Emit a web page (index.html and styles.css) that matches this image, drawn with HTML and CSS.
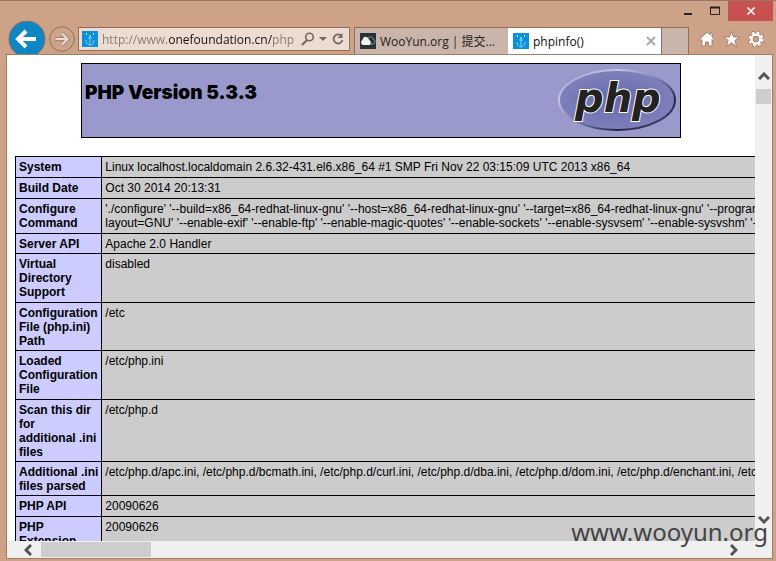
FILE: index.html
```html
<!DOCTYPE html>
<html lang="en">
	<head>
		<meta charset="UTF-8">
		<title>phpinfo()</title>
		<link rel="stylesheet" href="styles.css">
	</head>
	<body>
		<div class="window">
			<!-- window buttons -->
			<div class="titlebar">
				<button class="win-btn" aria-label="Minimize"><svg width="10" height="10"><path d="M1 8h8" stroke="#222" stroke-width="2"/></svg></button>
				<button class="win-btn" aria-label="Maximize"><svg width="10" height="10"><path d="M.5 1v7.500h9V1" fill="none" stroke="#222"/><path d="M0 1.500h10" stroke="#222" stroke-width="2"/></svg></button>
				<button class="win-btn close" aria-label="Close"><svg width="10" height="10"><path d="M1.500 1.500l7 7M8.500 1.500l-7 7" stroke="#fff" stroke-width="1.600"/></svg></button>
			</div>

			<!-- navigation, address and tabs -->
			<div class="nav">
				<button class="back" aria-label="Back">
					<svg width="38" height="38" viewBox="0 0 38 38"><circle cx="19" cy="18" r="18" fill="#0e86c4" stroke="#8b6d5c"/><path d="M18 10l-8 8 8 8M11 18h17" fill="none" stroke="#fff" stroke-width="4"/></svg>
				</button>
				<button class="forward" aria-label="Forward">
					<svg width="26" height="26" viewBox="0 0 26 26"><circle cx="13" cy="13" r="12.300" fill="none" stroke="#91705e"/><path d="M13 7.500l5.500 5.500-5.500 5.500M6 13h12" fill="none" stroke="#a18575" stroke-width="4"/><path d="M13 7.500l5.500 5.500-5.500 5.500M6.500 13h11.500" fill="none" stroke="#eddbd0" stroke-width="2.200"/></svg>
				</button>
				<div class="address">
					<svg class="favicon" viewBox="0 0 16 16"><path d="M0 0h16v16H0z" fill="#0b91da"/><path d="M8 6v8M4 9c0 3 2 5 4 5s4-2 4-5M6 7h4" fill="none" stroke="#8acbee"/><path d="M7 4h2v2H7z" fill="#8acbee"/><path d="M4 2h1v2H4zM11 2h1v2h-1z" fill="#d4eefa"/></svg>
					<input class="url" type="text" aria-label="Address" value="http://www.onefoundation.cn/php">
					<button class="tool" aria-label="Search"><svg width="14" height="14"><circle cx="8.500" cy="5" r="3.800" fill="none" stroke="#75665e" stroke-width="1.600"/><path d="M6 8l-5 5" stroke="#75665e" stroke-width="2.200"/></svg></button>
					<button class="tool" aria-label="Show address list"><svg width="8" height="14"><path d="M0 5h8l-4 4z" fill="#75665e"/></svg></button>
					<button class="tool" aria-label="Refresh"><svg width="14" height="14"><path d="M10.500 4A4.500 4.500 0 1 0 11.500 8" fill="none" stroke="#75665e" stroke-width="1.800"/><path d="M11.500 1v5h-5z" fill="#75665e"/></svg></button>
				</div>
				<div class="tabs">
					<a class="tab" href="#">
						<svg class="favicon" viewBox="0 0 16 16"><path d="M0 0h16v16H0z" fill="#2c3138"/><path d="M8 5c2-2 5-1 5 1 3 1 2 5 0 5H8z" fill="none" stroke="#8795a0"/><path d="M3 12a2.700 2.700 0 0 1-.5-5C3 3.500 7 2.500 8.500 6L11 9l-1 3z" fill="#f2f3f4"/></svg>
						<span>WooYun.org | 提交...</span>
					</a>
					<a class="tab active" href="#">
						<svg class="favicon" viewBox="0 0 16 16"><path d="M0 0h16v16H0z" fill="#0b91da"/><path d="M8 6v8M4 9c0 3 2 5 4 5s4-2 4-5M6 7h4" fill="none" stroke="#8acbee"/><path d="M7 4h2v2H7z" fill="#8acbee"/><path d="M4 2h1v2H4zM11 2h1v2h-1z" fill="#d4eefa"/></svg>
						<span>phpinfo()</span>
						<svg class="tab-close" width="10" height="10"><path d="M1 1l8 8M9 1l-8 8" stroke="#aaa" stroke-width="2"/></svg>
					</a>
					<button class="new-tab" aria-label="New tab"></button>
				</div>
				<div class="tools">
					<button class="tool" aria-label="Home"><svg width="16" height="16"><path d="M8 1L.5 8.500l1.200 1L3 8.500V15h3.500v-4h3v4H13V8.500l1.300 1 1.200-1L13 6V2h-2v2z" fill="#fff" stroke="#94725f" stroke-width=".8"/></svg></button>
					<button class="tool" aria-label="Favorites"><svg width="17" height="16"><path d="M8.500.5l2 5.500h6l-4.700 3.500 1.900 6-5.200-3.700-5.200 3.700 1.900-6L.5 6h6z" fill="#fff" stroke="#94725f" stroke-width=".8"/></svg></button>
					<button class="tool" aria-label="Tools"><svg width="16" height="16"><g fill="none"><circle cx="8" cy="8" r="6.500" stroke="#94725f" stroke-width="3.600" stroke-dasharray="3.100 2"/><circle cx="8" cy="8" r="4.500" stroke="#94725f" stroke-width="3.800"/><circle cx="8" cy="8" r="6.500" stroke="#fff" stroke-width="2.200" stroke-dasharray="2.700 2.400"/><circle cx="8" cy="8" r="4.500" stroke="#fff" stroke-width="2.600"/></g></svg></button>
				</div>
			</div>

			<div class="viewport">
				<div class="page">
					<div class="header">
						<h1>PHP Version 5.3.3</h1>
						<svg class="logo" width="120" height="67" viewBox="0 0 120 67" role="img" aria-label="PHP logo">
							<defs>
								<linearGradient id="edge" x1="0" y1="0" x2="1" y2="1">
									<stop offset="0" stop-color="#9999cc"/>
									<stop offset=".25" stop-color="#c6c6e4"/>
									<stop offset=".5" stop-color="#8080b8"/>
									<stop offset=".75" stop-color="#25253f"/>
									<stop offset="1" stop-color="#55558a"/>
								</linearGradient>
								<radialGradient id="face">
									<stop offset="0" stop-color="#6a6aaa"/>
									<stop offset="1" stop-color="#7d80bb"/>
								</radialGradient>
							</defs>
							<ellipse cx="60" cy="33" rx="58" ry="30" fill="url(#face)" stroke="url(#edge)" stroke-width="2"/>
							<text class="outline" x="18" y="45">php</text>
						</svg>
					</div>

					<table class="info">
						<tr><th>System</th><td>Linux localhost.localdomain 2.6.32-431.el6.x86_64 #1 SMP Fri Nov 22 03:15:09 UTC 2013 x86_64</td></tr>
						<tr><th>Build Date</th><td>Oct 30 2014 20:13:31</td></tr>
						<tr><th>Configure<br>Command</th><td>'./configure' '--build=x86_64-redhat-linux-gnu' '--host=x86_64-redhat-linux-gnu' '--target=x86_64-redhat-linux-gnu' '--program<br>layout=GNU' '--enable-exif' '--enable-ftp' '--enable-magic-quotes' '--enable-sockets' '--enable-sysvsem' '--enable-sysvshm' '-</td></tr>
						<tr class="snug"><th>Server API</th><td>Apache 2.0 Handler</td></tr>
						<tr><th>Virtual<br>Directory<br>Support</th><td>disabled</td></tr>
						<tr class="snug"><th>Configuration<br>File (php.ini)<br>Path</th><td>/etc</td></tr>
						<tr><th>Loaded<br>Configuration<br>File</th><td>/etc/php.ini</td></tr>
						<tr class="snug"><th>Scan this dir<br>for<br>additional .ini<br>files</th><td>/etc/php.d</td></tr>
						<tr class="snug"><th>Additional .ini<br>files parsed</th><td>/etc/php.d/apc.ini, /etc/php.d/bcmath.ini, /etc/php.d/curl.ini, /etc/php.d/dba.ini, /etc/php.d/dom.ini, /etc/php.d/enchant.ini, /etc</td></tr>
						<tr><th>PHP API</th><td>20090626</td></tr>
						<tr><th>PHP<br>Extension</th><td>20090626</td></tr>
					</table>
				</div>

				<div class="scroll-y">
					<svg width="12" height="8"><path d="M1 7l5-5 5 5" fill="none" stroke="#555" stroke-width="3"/></svg>
					<div class="thumb"></div>
					<svg width="12" height="8"><path d="M1 1l5 5 5-5" fill="none" stroke="#555" stroke-width="3"/></svg>
				</div>
				<div class="scroll-x">
					<svg width="8" height="12"><path d="M7 1L2 6l5 5" fill="none" stroke="#555" stroke-width="3"/></svg>
					<div class="thumb"></div>
					<svg width="8" height="12"><path d="M1 1l5 5-5 5" fill="none" stroke="#555" stroke-width="3"/></svg>
				</div>
			</div>
			<div class="watermark">www.wooyun.org</div>
		</div>
	</body>
</html>
```
FILE: styles.css
```css
* {
    margin: 0;
    padding: 0;
    box-sizing: border-box;
}
body {
    font-family: "Liberation Sans", Arial, sans-serif;
    font-size: 12px;
    color: #000;
}
button {
    border: 0;
    background: none;
    display: flex;
    align-items: center;
    justify-content: center;
}
svg {
    display: block;
    flex: none;
}
.window {
    position: relative;
    display: flex;
    flex-direction: column;
    height: 100vh;
    padding: 0 3px 2px 6px;
    background-color: #cda287;
    border-top: 1px solid #9b7663;
    overflow: hidden;
}

/* title bar */
.titlebar {
    display: flex;
    justify-content: flex-end;
    flex: none;
    height: 20px;
}
.win-btn {
    width: 27px;
}
.win-btn.close {
    width: 45px;
    background-color: #c75050;
}

/* navigation row */
.nav {
    display: flex;
    flex: none;
    height: 33px;
    padding-left: 2px;
    overflow: hidden;
}
.back {
    width: 38px;
    height: 38px;
}
.forward {
    width: 26px;
    height: 26px;
    margin: 5px 3px 0;
}
.address {
    display: flex;
    align-items: center;
    flex: 1;
    min-width: 0;
    height: 24px;
    margin: 6px 4px 0 0;
    padding: 0 4px 0 3px;
    gap: 4px;
    border: 1px solid #8f6e5c;
    background-color: #eddcd2;
}
.favicon {
    width: 16px;
    height: 16px;
}
.url,
.tab {
    font-family: "Open Sans", "Noto Sans CJK SC", sans-serif;
    font-size: 12px;
}
.url {
    flex: 1;
    min-width: 0;
    height: 22px;
    border: 0;
    /* host part is darker than the rest */
    color: transparent;
    background: linear-gradient(to right, #877970 66px, #111 66px, #111 170px, #877970 170px);
    -webkit-background-clip: text;
    background-clip: text;
}
.tabs {
    display: flex;
    margin-top: 6px;
    border: 1px solid #8f6e5c;
    border-bottom: 0;
}
.tab {
    display: flex;
    align-items: center;
    width: 153px;
    padding: 0 5px;
    gap: 4px;
    color: #222;
    background-color: #cab5aa;
    text-decoration: none;
    white-space: nowrap;
}
.tab.active {
    color: #111;
    background-color: #fff;
}
.tab-close {
    margin-left: auto;
}
.new-tab {
    width: 27px;
    border-left: 1px solid #8f6e5c;
    background-color: #cab5aa;
}
.tools {
    display: flex;
    align-items: center;
    gap: 8px;
    padding: 2px 9px 0 10px;
}

/* page area with its scroll bars */
.viewport {
    display: grid;
    grid-template-columns: 1fr 17px;
    grid-template-rows: 1fr 17px;
    flex: 1;
    min-height: 0;
    border: 1px solid #a07c69;
    background-color: #f0f0f0;
}
.page {
    min-width: 0;
    min-height: 0;
    padding: 8px;
    background-color: #fff;
    overflow: hidden;
}
.header {
    display: flex;
    justify-content: space-between;
    width: 600px;
    height: 75px;
    margin: 0 auto 18px;
    padding: 3px;
    border: 1px solid #000;
    background-color: #9999cc;
}
.header h1 {
    margin-top: 14px;
    font-family: Inter, sans-serif;
    font-size: 19px;
    font-weight: 900;
    line-height: 24px;
}
.logo text {
    font-family: "DejaVu Sans", sans-serif;
    font-size: 40px;
    font-weight: bold;
    font-style: italic;
    fill: #222;
    stroke: #fff;
    stroke-width: 2px;
    paint-order: stroke;
}
.info {
    width: 240%;
    border-collapse: collapse;
    line-height: 14px;
}
.info th,
.info td {
    padding: 3px;
    border: 1px solid #000;
    text-align: left;
    vertical-align: top;
    white-space: nowrap;
}
.info th {
    width: 86px;
    background-color: #ccccff;
}
.info td {
    background-color: #ccc;
}
.info .snug th,
.info .snug td {
    padding-bottom: 2px;
}
.scroll-y,
.scroll-x {
    display: flex;
    align-items: center;
}
.scroll-y {
    flex-direction: column;
    padding: 17px 0;
}
.scroll-x {
    padding: 0 17px;
}
.thumb {
    background-color: #cdcdcd;
}
.scroll-y .thumb {
    width: 15px;
    height: 15px;
    margin: 9px 0 auto;
}
.scroll-x .thumb {
    width: 110px;
    height: 15px;
    margin: 0 auto 0 9px;
}

.watermark {
    position: absolute;
    right: 8px;
    bottom: 12px;
    font-family: "Noto Sans", sans-serif;
    font-size: 24px;
    line-height: 34px;
    color: #444;
}
```
